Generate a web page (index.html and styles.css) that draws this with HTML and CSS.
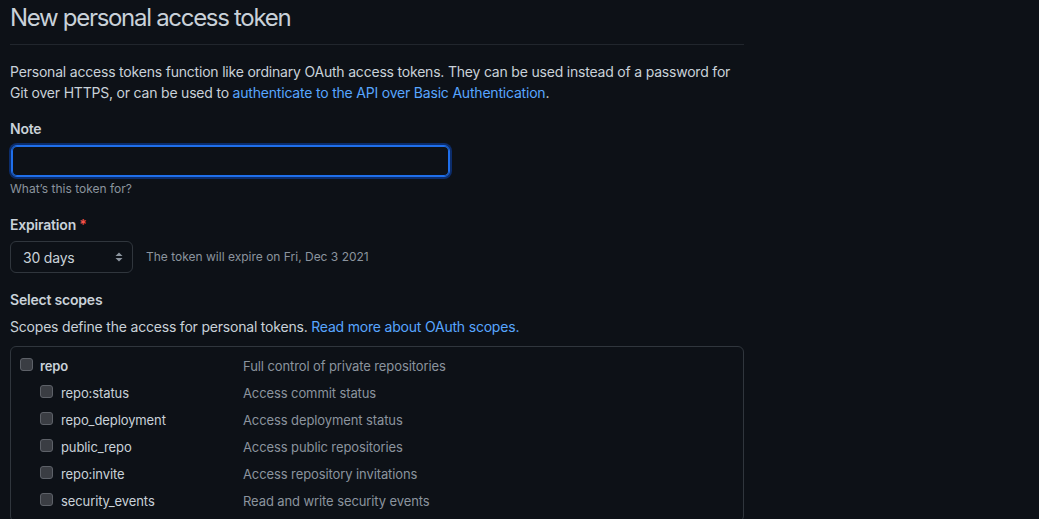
FILE: index.html
```html
<!DOCTYPE html>
<html lang="en">
<head>
<meta charset="utf-8">
<title>New personal access token</title>
<link rel="stylesheet" href="styles.css">
</head>
<body>
<div class="page">
  <div class="subhead">
    <h2 class="subhead-heading">New personal access token</h2>
  </div>
  <p class="intro">Personal access tokens function like ordinary OAuth access tokens. They can be used instead of a password for Git over HTTPS, or can be used to <a href="#">authenticate to the API over Basic Authentication</a>.</p>

  <div class="form-group">
    <label class="label">Note</label>
    <div class="input"></div>
    <p class="note">What’s this token for?</p>
  </div>

  <div class="form-group exp">
    <label class="label">Expiration <span class="req">*</span></label>
    <div class="exp-row">
      <div class="select">
        <span>30 days</span>
        <svg class="arrows" width="8" height="12" viewBox="0 0 8 12"><path d="M4 1.5 L7.5 5 H0.5 Z M4 10.5 L7.5 7 H0.5 Z" fill="#8b949e"/></svg>
      </div>
      <span class="exp-note">The token will expire on Fri, Dec 3 2021</span>
    </div>
  </div>

  <div class="form-group scopes">
    <label class="label">Select scopes</label>
    <p class="scopes-desc">Scopes define the access for personal tokens. <a href="#">Read more about OAuth scopes.</a></p>
    <div class="scope-box">
      <div class="scope-row parent"><span class="cb"></span><span class="name">repo</span><span class="desc">Full control of private repositories</span></div>
      <div class="scope-row child"><span class="cb"></span><span class="name">repo:status</span><span class="desc">Access commit status</span></div>
      <div class="scope-row child"><span class="cb"></span><span class="name">repo_deployment</span><span class="desc">Access deployment status</span></div>
      <div class="scope-row child"><span class="cb"></span><span class="name">public_repo</span><span class="desc">Access public repositories</span></div>
      <div class="scope-row child"><span class="cb"></span><span class="name">repo:invite</span><span class="desc">Access repository invitations</span></div>
      <div class="scope-row child"><span class="cb"></span><span class="name">security_events</span><span class="desc">Read and write security events</span></div>
    </div>
  </div>
</div>
</body>
</html>
```
FILE: styles.css
```css
html, body {
  margin: 0;
  padding: 0;
  background: #0d1117;
}
body {
  font-family: Inter, "Noto Sans", "Liberation Sans", sans-serif;
  font-size: 14px;
  line-height: 1.5;
  letter-spacing: -0.2px;
  color: #c9d1d9;
  overflow: hidden;
  height: 519px;
}
a { color: #58a6ff; text-decoration: none; }
.page {
  width: 734px;
  padding: 0 10px;
}
.subhead {
  border-bottom: 1px solid #21262d;
  padding-bottom: 8px;
  margin-bottom: 16px;
}
.subhead-heading {
  margin: 0;
  font-size: 24px;
  font-weight: 400;
  line-height: 36px;
  letter-spacing: -1.3px;
}
.intro {
  margin: 0 0 15px;
  line-height: 21px;
}
.form-group { margin: 0; }
.label {
  display: block;
  font-weight: 600;
  line-height: 21px;
  margin-bottom: 6px;
}
.req { color: #f85149; }
.input {
  box-sizing: border-box;
  height: 32px;
  width: 439px;
  border: 1px solid #1f6feb;
  border-radius: 6px;
  background: #0d1117;
  box-shadow: inset 0 0 0 1px #1f6feb, 0 0 0 2px #0c2d6b;
  margin: 0 0 0 1px;
}
.note {
  margin: 3px 0 0;
  font-size: 12px;
  letter-spacing: 0;
  color: #8b949e;
  line-height: 18px;
}
.exp { margin-top: 16px; }
.exp-row {
  display: flex;
  align-items: center;
  gap: 13px;
}
.select {
  box-sizing: border-box;
  width: 123px;
  height: 32px;
  border: 1px solid #30363d;
  border-radius: 6px;
  display: flex;
  align-items: center;
  justify-content: space-between;
  padding: 0 8px 0 12px;
}
.arrows { margin-right: 1px; }
.exp-note {
  font-size: 12px;
  letter-spacing: 0;
  color: #8b949e;
}
.scopes { margin-top: 16px; }
.scopes .label { margin-bottom: 6px; }
.scopes-desc {
  margin: 0 0 9px;
  line-height: 21px;
}
.scope-box {
  border: 1px solid #30363d;
  border-radius: 6px;
  padding: 6px 9px 6px;
}
.scope-row {
  display: flex;
  align-items: center;
  height: 27px;
  font-size: 13px;
  letter-spacing: -0.1px;
}
.cb {
  box-sizing: border-box;
  width: 13px;
  height: 13px;
  border: 1px solid #5d6168;
  border-radius: 3px;
  background: #3a3d43;
  margin-top: -4px;
}
.name {
  width: 203px;
  margin-left: 7px;
}
.parent .name { font-weight: 600; }
.child .cb { margin-left: 20px; }
.child .name { width: 182px; margin-left: 8px; }
.desc { color: #8b949e; }
```
